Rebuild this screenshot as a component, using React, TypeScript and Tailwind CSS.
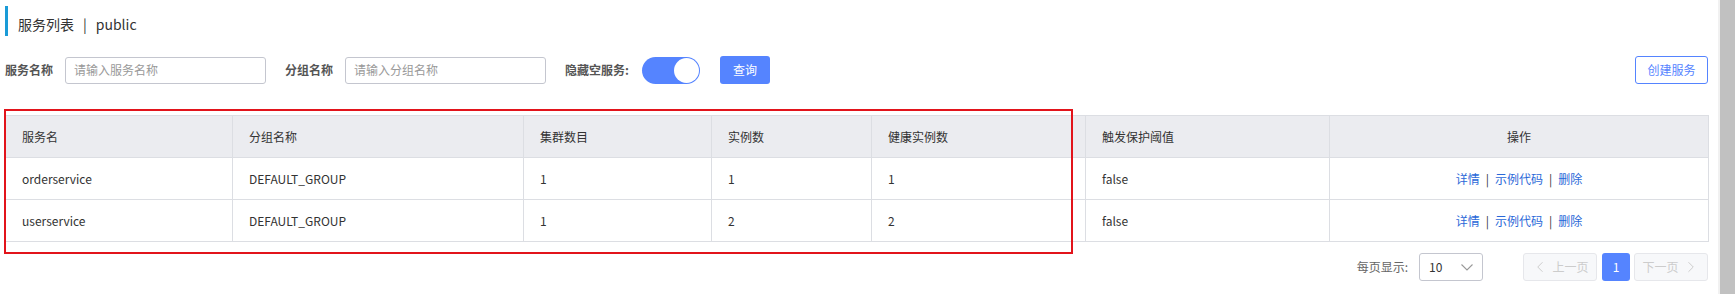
import { ChevronLeft, ChevronRight } from "lucide-react";

const columns = [
  { title: "服务名", width: 227 },
  { title: "分组名称", width: 291 },
  { title: "集群数目", width: 188 },
  { title: "实例数", width: 160 },
  { title: "健康实例数", width: 214 },
  { title: "触发保护阈值", width: 244 },
  { title: "操作", width: 379 },
];

const rows = [
  { name: "orderservice", group: "DEFAULT_GROUP", clusters: 1, count: 1, healthy: 1, threshold: "false" },
  { name: "userservice", group: "DEFAULT_GROUP", clusters: 1, count: 2, healthy: 2, threshold: "false" },
];

function Field({ label, placeholder }: { label: string; placeholder: string }) {
  return (
    <div className="flex items-center">
      <span className="mr-[12px] font-bold text-[#555]">{label}</span>
      <div className="flex h-[27px] w-[201px] items-center rounded-[3px] border border-[#c4c6cf] pl-[8px] text-[#999]">
        {placeholder}
      </div>
    </div>
  );
}

function Pager() {
  return (
    <div className="mt-[11px] flex h-[28px] items-center justify-end">
      <span className="mr-[11px] text-[#666]">每页显示:</span>
      <div className="flex h-[28px] w-[64px] items-center justify-between rounded-[3px] border border-[#c4c6cf] pl-[9px] pr-[9px] text-[#333]">
        <span>10</span>
        <svg width="12" height="7" viewBox="0 0 12 7" fill="none">
          <polyline points="0.5,0.5 6,6 11.5,0.5" stroke="#999" strokeWidth="1.1" />
        </svg>
      </div>
      <div className="ml-[40px] flex h-[28px] w-[74px] items-center justify-center gap-[3px] rounded-[3px] border border-[#e6e7eb] bg-[#f7f8fa] text-[#ccc]">
        <ChevronLeft size={18} strokeWidth={1.3} />
        <span>上一页</span>
      </div>
      <div className="ml-[5px] flex h-[28px] w-[28px] items-center justify-center rounded-[3px] bg-[#5584ff] text-white">
        1
      </div>
      <div className="ml-[4px] flex h-[28px] w-[74px] items-center justify-center gap-[3px] rounded-[3px] border border-[#e6e7eb] bg-[#f7f8fa] text-[#ccc]">
        <span>下一页</span>
        <ChevronRight size={18} strokeWidth={1.3} />
      </div>
    </div>
  );
}

export default function App() {
  return (
    <div className="flex h-[294px] w-[1735px] overflow-hidden bg-white font-['Noto_Sans_CJK_SC',sans-serif] text-[12px] text-[#333]">
      <div className="relative w-[1718px] pl-[5px] pr-[10px]">
        <div className="mt-[6px] flex h-[30px] items-center border-l-[3px] border-[#1a9bd7] pl-[10px] pt-[6px] text-[14px] text-[#333]">
          服务列表<span className="mx-[9px]">|</span>public
        </div>

        <div className="mt-[20px] flex h-[28px] items-center">
          <Field label="服务名称" placeholder="请输入服务名称" />
          <div className="ml-[19px]">
            <Field label="分组名称" placeholder="请输入分组名称" />
          </div>
          <span className="ml-[19px] font-bold text-[#555]">隐藏空服务:</span>
          <div className="ml-[13px] flex h-[27px] w-[58px] items-center justify-end rounded-full bg-[#5584ff] pr-[1px]">
            <div className="h-[25px] w-[25px] rounded-full bg-white" />
          </div>
          <button className="ml-[20px] h-[28px] w-[50px] rounded-[3px] bg-[#5584ff] text-white">查询</button>
          <button className="ml-auto h-[28px] w-[73px] rounded-[3px] border border-[#5584ff] text-[#5584ff]">
            创建服务
          </button>
        </div>

        <table className="mt-[31px] w-[1703px] table-fixed border-collapse border border-[#dcdee3]">
          <colgroup>
            {columns.map((c) => (
              <col key={c.title} style={{ width: c.width }} />
            ))}
          </colgroup>
          <thead>
            <tr className="h-[42px] bg-[#ebecf0]">
              {columns.map((c, i) => (
                <th
                  key={c.title}
                  className={`border border-[#dcdee3] px-[16px] font-normal text-[#333] ${i === 6 ? "text-center" : "text-left"}`}
                >
                  {c.title}
                </th>
              ))}
            </tr>
          </thead>
          <tbody>
            {rows.map((r) => (
              <tr key={r.name} className="h-[42px]">
                <td className="border border-[#dcdee3] px-[16px]">{r.name}</td>
                <td className="border border-[#dcdee3] px-[16px]">{r.group}</td>
                <td className="border border-[#dcdee3] px-[16px]">{r.clusters}</td>
                <td className="border border-[#dcdee3] px-[16px]">{r.count}</td>
                <td className="border border-[#dcdee3] px-[16px]">{r.healthy}</td>
                <td className="border border-[#dcdee3] px-[16px]">{r.threshold}</td>
                <td className="border border-[#dcdee3] px-[16px] text-center">
                  <a className="text-[#2a68d8]">详情</a>
                  <span className="mx-[6px]">|</span>
                  <a className="text-[#2a68d8]">示例代码</a>
                  <span className="mx-[6px]">|</span>
                  <a className="text-[#2a68d8]">删除</a>
                </td>
              </tr>
            ))}
          </tbody>
        </table>

        <Pager />

        {/* annotation box drawn over the table */}
        <div className="pointer-events-none absolute left-[4px] top-[109px] h-[145px] w-[1069px] border-2 border-[#e2141b]" />
      </div>

      <div className="h-full w-[17px] bg-[#f1f1f1] pl-[2px]">
        <div className="h-full w-full bg-[#c1c1c1]" />
      </div>
    </div>
  );
}
